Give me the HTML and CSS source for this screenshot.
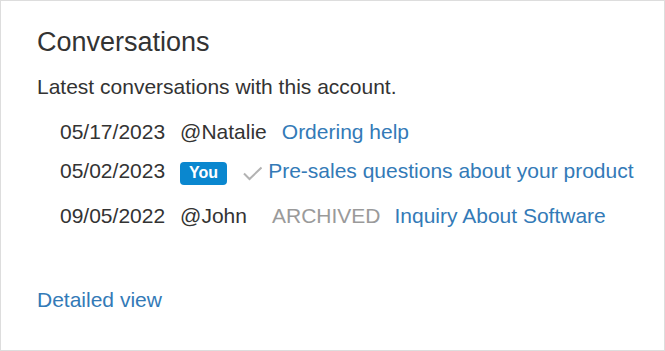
FILE: index.html
```html
<!DOCTYPE html>
<html lang="en">
<head>
    <meta charset="UTF-8">
    <meta name="viewport" content="width=device-width, initial-scale=1.0">
    <title>Conversations</title>
    <link rel="stylesheet" href="styles.css">
</head>
<body>

    <div class="panel">
        <h3 class="panel-title">Conversations</h3>
        <p class="panel-lead">Latest conversations with this account.</p>

        <ul class="conv-list">
            <li class="conv-item">
                <span class="conv-date">05/17/2023</span>
                <span class="conv-user">@Natalie</span>
                <a class="conv-link" href="#">Ordering help</a>
            </li>
            <li class="conv-item mine">
                <span class="conv-date">05/02/2023</span>
                <span class="badge-you">You</span>
                <a class="conv-link" href="#"><svg class="check" width="20" height="18" viewBox="0 0 20 18"><path d="M2 10.5 L7.5 16 L19.5 4.5" fill="none" stroke="#b3b3b3" stroke-width="2"/></svg>Pre-sales questions about your product</a>
            </li>
            <li class="conv-item">
                <span class="conv-date">09/05/2022</span>
                <span class="conv-user">@John</span>
                <span class="conv-archived">ARCHIVED</span>
                <a class="conv-link" href="#">Inquiry About Software</a>
            </li>
        </ul>

        <a class="detail-link" href="#">Detailed view</a>
    </div>

</body>
</html>
```

FILE: styles.css
```css
body {
    margin: 0;
    font-family: "Liberation Sans", Arial, sans-serif;
    color: #333;
    background-color: #fff;
}

a {
    color: #337ab7;
    text-decoration: none;
}

.panel {
    box-sizing: border-box;
    width: 665px;
    height: 351px;
    border: 1px solid #ddd;
    padding: 27px 30px 27px 36px;
}

.panel-title {
    margin: 0 0 14px 0;
    font-size: 27px;
    font-weight: normal;
    line-height: 1.1;
}

.panel-lead {
    margin: 0 0 15px 0;
    font-size: 21px;
    line-height: 30px;
}

.conv-list {
    list-style: none;
    margin: 0;
    padding: 0 0 0 23px;
}

.conv-item {
    display: flex;
    align-items: baseline;
    gap: 15px;
    font-size: 21px;
    line-height: 30px;
    margin-bottom: 9px;
    white-space: nowrap;
}

.conv-item.mine {
    margin-bottom: 15px;
}

.badge-you {
    display: inline-block;
    background-color: #0a87cf;
    color: #fff;
    font-size: 16px;
    font-weight: bold;
    line-height: 1;
    padding: 3px 9px 4px;
    border-radius: 4px;
}

.check {
    vertical-align: -3px;
    margin-right: 6px;
}

.conv-archived {
    color: #9a9a9a;
    margin-left: 10px;
    margin-right: -1px;
}

.detail-link {
    display: block;
    margin-top: 54px;
    font-size: 21px;
    line-height: 30px;
}
```
